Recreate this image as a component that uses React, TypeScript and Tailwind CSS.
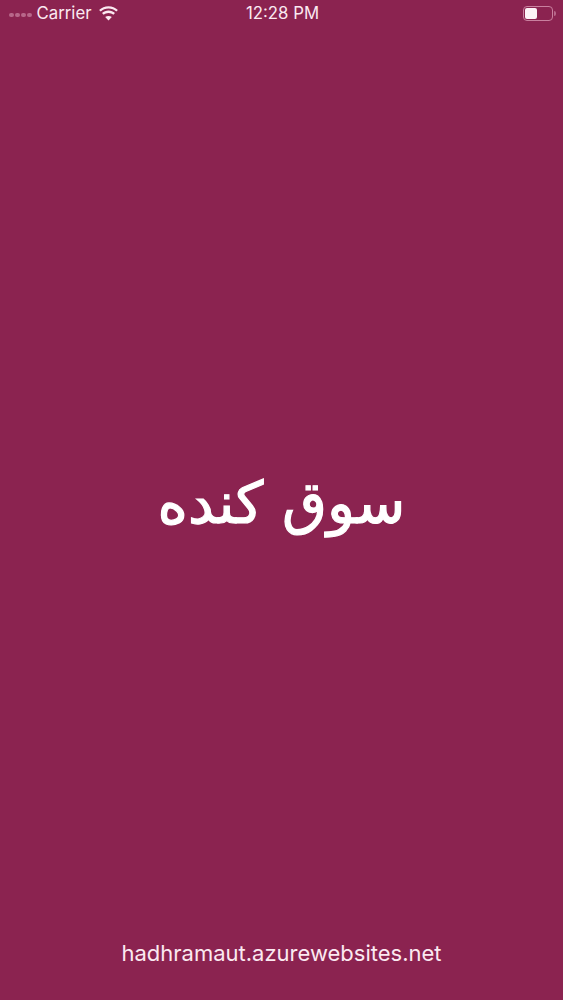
import React from 'react'

function Wifi() {
  return (
    <svg width="21" height="15" viewBox="0 0 21 15" fill="#fbe9f1" className="block">
      <path d="M10.500 2.600c3 0 5.700 1.100 7.800 3l1.600-1.700C17.400 1.600 14.100 0.200 10.500 0.200S3.600 1.600 1.100 3.900l1.600 1.700c2.100-1.900 4.800-3 7.800-3z" />
      <path d="M10.500 7c1.800 0 3.500 0.700 4.800 1.800l1.700-1.700c-1.700-1.600-4-2.500-6.500-2.500s-4.800 0.900-6.500 2.500l1.700 1.700C7 7.700 8.700 7 10.500 7z" />
      <path d="M10.500 14.600l3.300-3.500c-0.900-0.800-2-1.200-3.300-1.200s-2.400 0.400-3.300 1.200z" />
    </svg>
  )
}

function Battery() {
  return (
    <div className="flex items-center gap-[1px]">
      <div className="w-[30px] h-[15px] rounded-[4px] border border-[#c9809f] p-[1px] flex">
        <div className="w-[12px] rounded-[2px] bg-[#fdf3f7]" />
      </div>
      <div className="w-[2px] h-[5px] rounded-r-sm bg-[#b8678a]" />
    </div>
  )
}

export default function App() {
  return (
    <div className="w-[563px] h-[1000px] bg-[#8b2350] flex flex-col text-white font-['Inter',sans-serif] overflow-hidden">
      {/* status bar */}
      <div className="h-[27px] flex items-center justify-between pl-[9px] pr-[7px] text-[#fbe9f1] text-[16.800px]">
        <div className="flex items-center w-[150px]">
          <div className="flex gap-[1.500px] mr-[5px] mt-[3px]">
            <span className="w-[4.500px] h-[4.500px] rounded-full bg-[#b8678a]" />
            <span className="w-[4.500px] h-[4.500px] rounded-full bg-[#b8678a]" />
            <span className="w-[4.500px] h-[4.500px] rounded-full bg-[#b8678a]" />
            <span className="w-[4.500px] h-[4.500px] rounded-full bg-[#b8678a]" />
          </div>
          <span>Carrier</span>
          <span className="ml-[6px]"><Wifi /></span>
        </div>
        <span>12:28 PM</span>
        <div className="w-[150px] flex justify-end">
          <Battery />
        </div>
      </div>

      {/* title */}
      <div className="flex-1 flex items-center justify-center pt-[41px]">
        <h1 dir="rtl" className="text-[58px] leading-none font-['DejaVu_Sans',sans-serif] [-webkit-text-stroke:1.2px_white]">
          سوق كنده
        </h1>
      </div>

      {/* footer */}
      <div className="pb-[32px] text-center text-[22px] leading-[30px] text-[#fbe9f1]">
        hadhramaut.azurewebsites.net
      </div>
    </div>
  )
}
